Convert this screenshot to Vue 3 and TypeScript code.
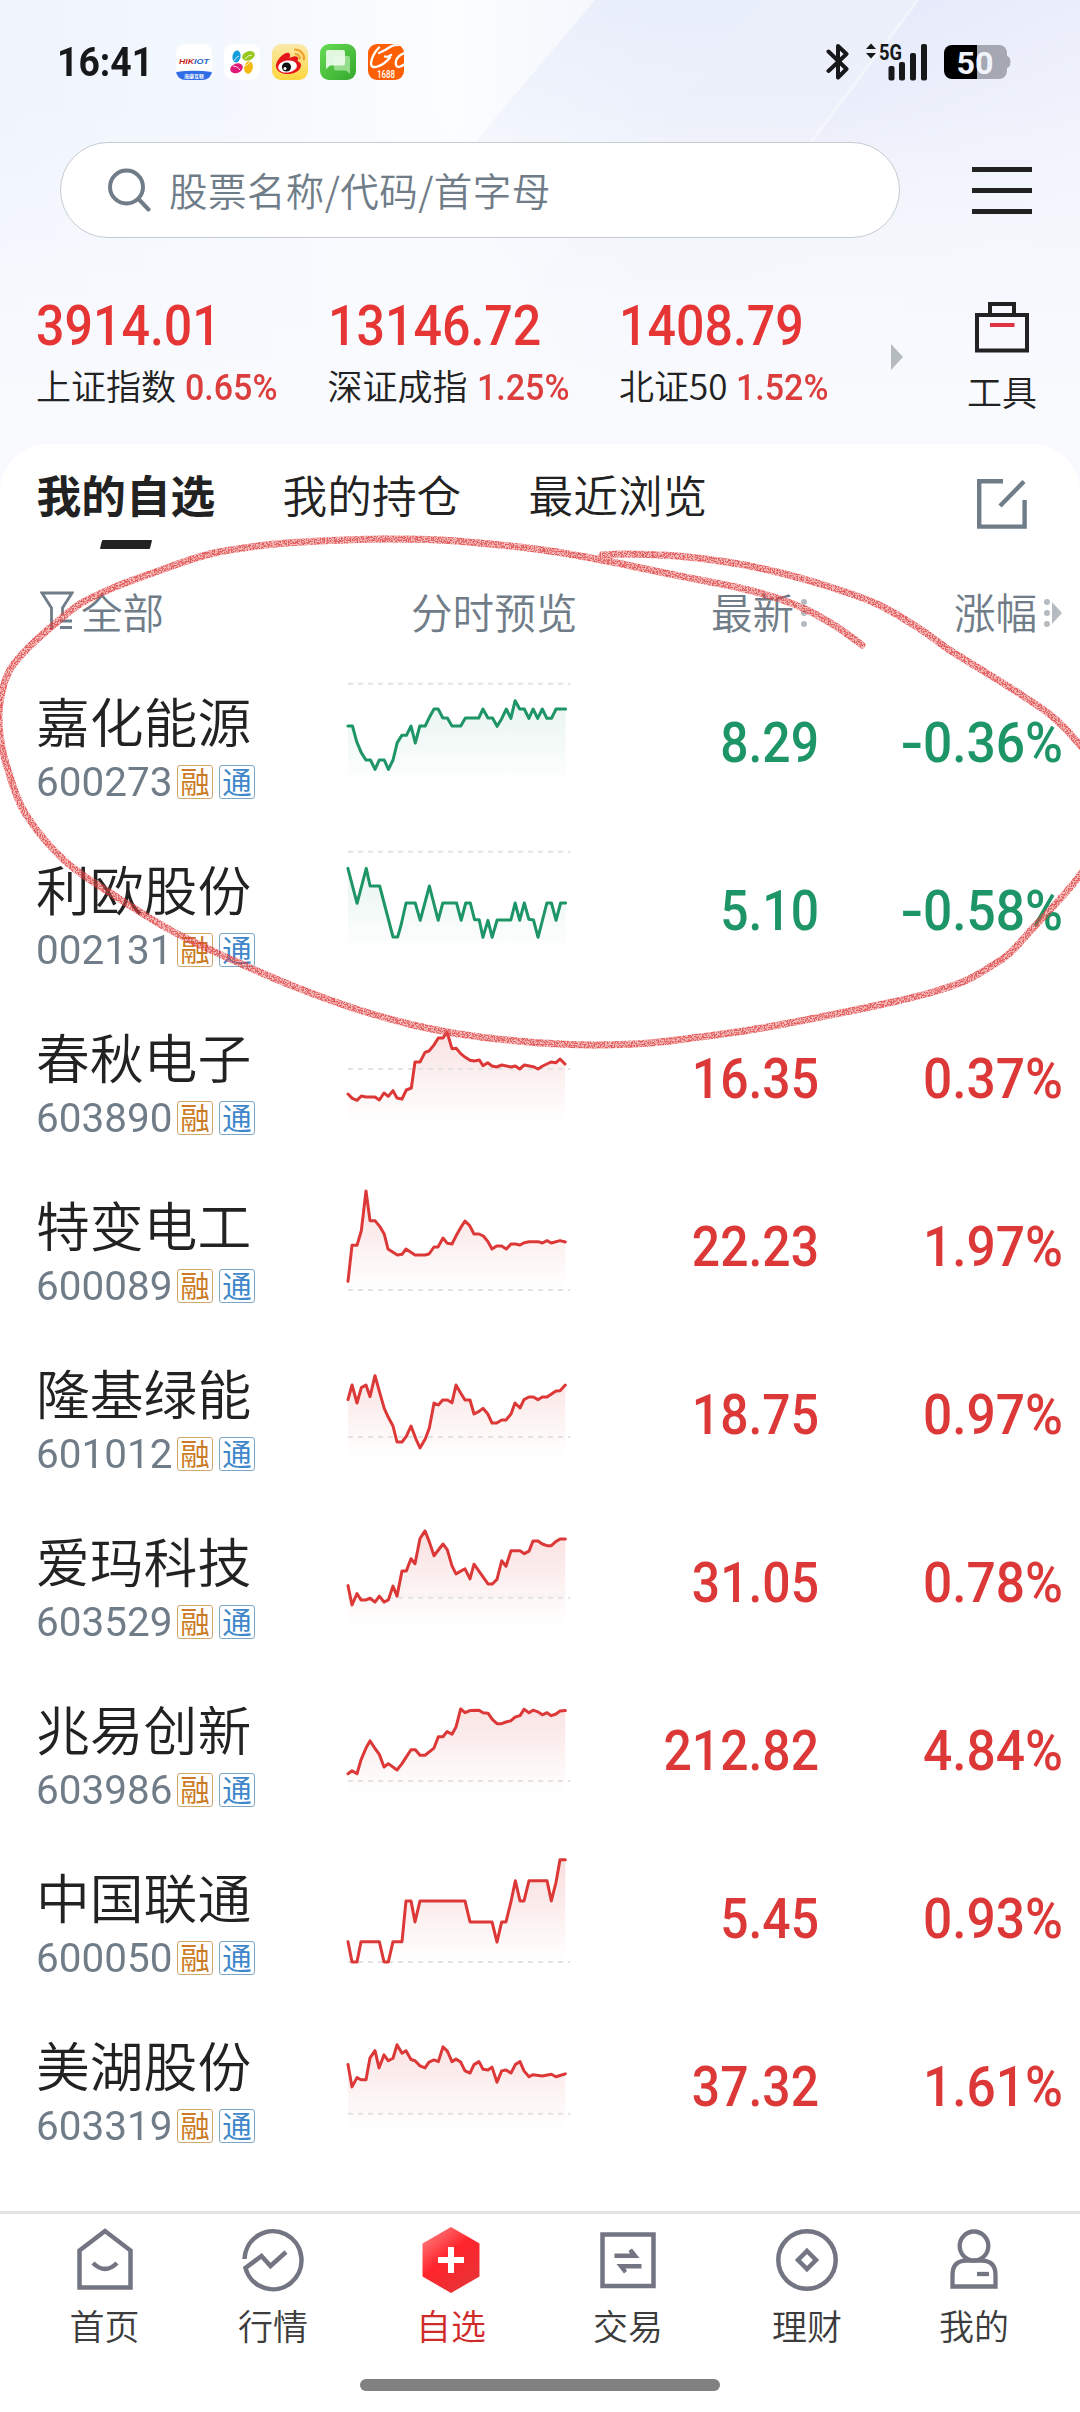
<script setup lang="ts">
interface IndexQuote {
  value: string
  name: string
  change: string
}

interface Stock {
  name: string
  code: string
  price: string
  change: string
  down?: boolean
  /* viewBox of the intraday trace: x, y, width, height */
  box: [number, number, number, number]
  prevClose: number
  trace: string
}

const indices: IndexQuote[] = [
  { value: '3914.01', name: '上证指数', change: '0.65%' },
  { value: '13146.72', name: '深证成指', change: '1.25%' },
  { value: '1408.79', name: '北证50', change: '1.52%' },
]

const stocks: Stock[] = [
  {
    name: '嘉化能源', code: '600273', price: '8.29', change: '-0.36%', down: true,
    box: [909.3, 51, 590.6, 504], prevClose: 131,
    trace: '909,258 921,258 932,305 944,338 956,360 968,360 980,388 991,360 1004,360 1015,388 1027,360 1038,308 1050,286 1062,286 1074,258 1085,309 1097,258 1111,258 1122,232 1134,207 1145,207 1157,234 1169,234 1181,258 1204,258 1216,234 1251,234 1262,207 1275,234 1287,234 1299,259 1311,236 1323,207 1335,235 1346,182 1358,207 1370,207 1382,235 1393,207 1405,235 1417,207 1429,235 1441,235 1453,207 1478,207',
  },
  {
    name: '利欧股份', code: '002131', price: '5.10', change: '-0.58%', down: true,
    box: [909.3, 555, 590.6, 504], prevClose: 635,
    trace: '909,685 933,790 957,685 967,738 992,738 1027,891 1039,891 1048,855 1061,789 1085,789 1098,841 1122,738 1145,841 1157,789 1193,789 1205,841 1217,789 1229,789 1240,839 1252,839 1262,892 1275,841 1286,892 1299,840 1335,840 1346,789 1358,841 1370,789 1382,838 1394,840 1406,892 1429,789 1441,789 1453,841 1465,789 1478,789',
  },
  {
    name: '春秋电子', code: '603890', price: '16.35', change: '0.37%',
    box: [84, -51, 678, 504], prevClose: 177,
    trace: '84,252 97,265 111,271 124,258 138,261 165,261 178,270 192,249 205,259 219,242 231,264 246,267 259,240 274,234 285,156 300,156 315,127 327,123 341,106 355,84 369,84 381,66 396,116 409,115 422,131 436,142 450,151 463,153 478,150 489,167 503,158 516,168 530,171 545,165 574,171 586,168 599,177 613,165 640,170 654,177 668,168 693,156 708,158 720,147 735,162',
  },
  {
    name: '特变电工', code: '600089', price: '22.23', change: '1.97%',
    box: [84, 453, 678, 504], prevClose: 840,
    trace: '84,814 96,706 111,706 124,662 138,543 150,632 165,632 179,649 193,673 204,717 232,735 246,733 258,717 285,735 315,735 327,732 342,711 354,711 369,684 382,700 396,702 409,676 422,653 435,633 449,647 462,672 477,672 490,678 504,695 516,717 530,708 545,708 559,717 573,702 586,702 600,705 613,698 627,695 654,695 667,699 681,692 694,699 720,692 736,696',
  },
  {
    name: '隆基绿能', code: '601012', price: '18.75', change: '0.97%',
    box: [84, 957, 678, 504], prevClose: 1281,
    trace: '84,1169 96,1125 111,1179 124,1133 138,1125 150,1160 165,1097 180,1151 193,1196 205,1222 219,1248 231,1296 246,1296 259,1279 273,1248 287,1285 300,1314 316,1286 328,1254 342,1179 355,1185 368,1170 382,1170 396,1178 408,1125 422,1149 435,1170 450,1170 462,1212 477,1204 489,1195 503,1211 516,1239 530,1239 545,1230 558,1230 573,1212 585,1179 600,1194 612,1169 627,1161 640,1161 654,1169 667,1161 681,1161 708,1143 720,1142 736,1125',
  },
  {
    name: '爱玛科技', code: '603529', price: '31.05', change: '0.78%',
    box: [84, 40.4, 678, 399.2], prevClose: 280,
    trace: '84,251 96,297 111,270 123,285 138,285 150,281 165,290 178,276 192,290 205,285 219,252 231,276 246,216 259,216 273,187 285,199 300,139 315,121 328,147 342,180 369,152 382,166 396,204 408,223 435,211 450,235 462,200 489,230 504,247 517,247 531,236 545,192 558,205 573,168 600,168 613,175 627,169 639,145 654,145 667,152 681,156 694,156 708,146 720,140 736,140',
  },
  {
    name: '兆易创新', code: '603986', price: '212.82', change: '4.84%',
    box: [84, 439.6, 678, 399.2], prevClose: 715,
    trace: '84,698 96,691 111,698 123,665 138,637 150,620 165,638 178,652 192,682 205,674 231,689 246,674 259,658 273,641 286,641 300,654 315,654 342,637 355,610 369,610 381,598 396,604 408,587 422,544 435,553 450,548 477,547 489,553 504,554 517,569 531,579 545,579 558,575 573,572 586,563 600,560 612,545 627,553 639,547 654,551 667,558 681,553 694,560 708,556 720,549 736,548',
  },
  {
    name: '中国联通', code: '600050', price: '5.45', change: '0.93%',
    box: [84, 838.7, 678, 399.2], prevClose: 1145,
    trace: '84,1097 96,1145 111,1145 123,1097 178,1097 192,1145 205,1145 219,1097 246,1097 258,1000 273,1000 285,1050 300,1000 435,1000 450,1050 516,1050 531,1098 545,1050 558,1050 573,1002 586,952 600,1000 612,1000 627,952 681,952 694,1000 708,956 720,902 736,902',
  },
  {
    name: '美湖股份', code: '603319', price: '37.32', change: '1.61%',
    box: [84, 1237.9, 678, 399.2], prevClose: 1506,
    trace: '84,1389 96,1442 111,1420 123,1425 138,1425 150,1373 165,1356 177,1397 192,1366 205,1380 219,1374 231,1342 246,1362 258,1356 273,1377 285,1380 300,1392 315,1397 327,1383 342,1378 355,1382 369,1347 382,1357 396,1382 408,1376 422,1383 435,1404 450,1409 462,1389 477,1382 489,1400 504,1402 516,1395 531,1431 545,1404 558,1402 573,1409 586,1389 600,1382 612,1404 627,1418 639,1413 667,1416 694,1412 708,1418 720,1415 736,1411',
  },
]

const viewBox = (s: Stock) => s.box.join(' ')
const rowY = (s: Stock, px: number) => s.box[1] + (px / 168) * s.box[3]

function area(s: Stock): string {
  const points = s.trace.split(' ')
  const firstX = points[0].split(',')[0]
  const lastX = points[points.length - 1].split(',')[0]
  const floor = rowY(s, 128)
  return `${firstX},${floor} ${s.trace} ${lastX},${floor}`
}

/* pencil stroke samples, joined by a Catmull-Rom curve */
const pencil: [number, number][] = [
  [862, 645], [837, 627], [807, 610], [777, 598], [740, 588], [700, 580], [660, 572], [617, 563], [580, 556],
  [543, 550], [490, 544], [440, 540], [383, 539], [330, 540.5], [275, 544], [210, 554], [153, 573], [115, 587],
  [80, 604], [50, 628], [27, 649], [11, 668], [3, 688], [-1, 713], [1, 742], [8, 770], [25, 813], [65, 861],
  [115, 896], [172, 931], [237, 962], [298, 988], [356, 1009], [413, 1025], [459, 1034], [517, 1041], [560, 1044],
  [600, 1045], [650, 1043], [700, 1037], [750, 1030], [800, 1021], [850, 1011], [893, 1002], [933, 992],
  [967, 980], [993, 965], [1010, 953], [1033, 928], [1060, 899], [1080, 875], [1094, 850], [1100, 810],
  [1094, 765], [1080, 745], [1053, 717], [1017, 692], [977, 667], [948, 649], [920, 629], [877, 604], [827, 586],
  [777, 572], [727, 562], [677, 556], [627, 554], [602, 555],
]

function smooth(p: [number, number][]): string {
  let d = `M${p[0].join(' ')}`
  for (let i = 0; i < p.length - 1; i++) {
    const a = p[i - 1] ?? p[i]
    const b = p[i]
    const c = p[i + 1]
    const e = p[i + 2] ?? c
    d += `C${b[0] + (c[0] - a[0]) / 6} ${b[1] + (c[1] - a[1]) / 6} ${c[0] - (e[0] - b[0]) / 6} ${c[1] - (e[1] - b[1]) / 6} ${c[0]} ${c[1]}`
  }
  return d
}
const loop = smooth(pencil)
</script>

<template>
  <div class="screen">
    <header class="top">
      <svg class="backdrop" viewBox="0 0 1080 520" preserveAspectRatio="none">
        <defs>
          <linearGradient id="sky" x1="0" y1="0" x2="1" y2="0">
            <stop offset="0" stop-color="#eff4fd" />
            <stop offset=".22" stop-color="#f4f8fe" />
            <stop offset=".42" stop-color="#fcfdff" />
            <stop offset=".6" stop-color="#f2f5fc" />
            <stop offset="1" stop-color="#f1f4fc" />
          </linearGradient>
          <linearGradient id="band" x1="0" y1="0" x2="0" y2="1">
            <stop offset="0" stop-color="#e5ecfa" />
            <stop offset="1" stop-color="#eaf0fc" stop-opacity="0" />
          </linearGradient>
          <linearGradient id="band2" x1="0" y1="0" x2=".6" y2="1">
            <stop offset="0" stop-color="#dfe3f9" />
            <stop offset="1" stop-color="#eef1fb" stop-opacity="0" />
          </linearGradient>
          <linearGradient id="fade" x1="0" y1="0" x2="0" y2="1">
            <stop offset=".2" stop-color="#f9fafe" stop-opacity="0" />
            <stop offset=".75" stop-color="#f9fafe" />
          </linearGradient>
        </defs>
        <rect width="1080" height="520" fill="url(#sky)" />
        <path d="M595 0H920L700 290H350Z" fill="url(#band)" opacity=".75" />
        <path d="M762 0H920L700 290H528Z" fill="#eeeffa" opacity=".4" />
        <path d="M918 0H1080V290H700Z" fill="url(#band2)" />
        <path d="M918 0L811 142" stroke="#f8f9fe" stroke-width="3" opacity=".7" />
        <rect width="1080" height="520" fill="url(#fade)" />
      </svg>

      <div class="status">
        <span class="clock">16:41</span>
        <div class="apps">
          <svg viewBox="0 0 36 36">
            <clipPath id="r1"><rect width="36" height="36" rx="9" /></clipPath>
            <g clip-path="url(#r1)">
              <rect width="36" height="36" fill="#fff" />
              <path d="M0 28Q18 25.500 36 28V36H0Z" fill="#2f6ce5" />
            </g>
            <text x="3" y="19.500" class="hik" textLength="15" lengthAdjust="spacingAndGlyphs" fill="#c4281c">HIK</text>
            <text x="18" y="19.500" class="hik" textLength="15" lengthAdjust="spacingAndGlyphs" fill="#1f66c0">IOT</text>
            <text x="8" y="34" class="hik-cn">海康互联</text>
          </svg>
          <svg viewBox="0 0 36 36">
            <rect width="36" height="36" rx="9" fill="#fff" />
            <ellipse cx="12.500" cy="12.500" rx="4" ry="6" fill="#139ddb" transform="rotate(10 12.500 12.500)" />
            <ellipse cx="24.500" cy="11.800" rx="6.500" ry="4.500" fill="#98c71d" transform="rotate(-22 24.500 11.800)" />
            <ellipse cx="12.500" cy="24.300" rx="6.500" ry="4.700" fill="#e01a77" transform="rotate(-20 12.500 24.300)" />
            <ellipse cx="24.500" cy="23.500" rx="4.300" ry="6.200" fill="#f5b90f" transform="rotate(12 24.500 23.500)" />
            <path d="M10 17q3-5 5-5M21 15q3-4 7-4M9 22q5 0 7 4M20 22q4-1 6-4" fill="none" stroke="#fff" stroke-width=".8" />
          </svg>
          <svg viewBox="0 0 36 36">
            <defs>
              <linearGradient id="wb" x1="0" y1="0" x2="0" y2="1">
                <stop offset="0" stop-color="#fbe9ab" /><stop offset="1" stop-color="#fdd63e" />
              </linearGradient>
            </defs>
            <rect width="36" height="36" rx="9" fill="url(#wb)" />
            <path d="M4 21C5 14 14 7 17 9Q19 11 17.500 14Q23 11 25.500 13Q27 14 25.500 17Q29.500 18.500 29 22C28 28 20 30.500 14 30C8 29.500 3.500 26 4 21Z" fill="#e5151c" />
            <ellipse cx="15.500" cy="22.500" rx="9.500" ry="6" fill="#fff" transform="rotate(-8 15.500 22.500)" />
            <circle cx="14.500" cy="23" r="4.600" fill="#111" />
            <circle cx="13" cy="24.500" r="1.500" fill="#fff" />
            <path d="M23 5.500A9 9 0 0 1 32 15.500M23.500 10A5 5 0 0 1 28 14.500" fill="none" stroke="#f0a02c" stroke-width="2" stroke-linecap="round" />
          </svg>
          <svg viewBox="0 0 36 36">
            <defs>
              <linearGradient id="sms" x1="0" y1="0" x2="1" y2="1">
                <stop offset="0" stop-color="#66dc55" /><stop offset="1" stop-color="#35a82b" />
              </linearGradient>
            </defs>
            <rect width="36" height="36" rx="9" fill="url(#sms)" />
            <path d="M16 12H28Q30 12 30 14V30L26 26.500H16Q14 26.500 14 24.500V14Q14 12 16 12Z" fill="#b9ebb2" opacity=".7" />
            <path d="M8 6H23Q25 6 25 8V19Q25 21.500 23 21.500H10L6 25V8Q6 6 8 6Z" fill="#effbed" opacity=".92" />
          </svg>
          <svg viewBox="0 0 36 36">
            <clipPath id="r5"><rect width="36" height="36" rx="9" /></clipPath>
            <g clip-path="url(#r5)">
              <rect width="36" height="36" fill="#fe5f05" />
              <path d="M11 3.500Q4 11 3 19Q3 24 8 23Q16 21 22 13.500M11 9Q18 6 22 3Q26 .5 31 1M17 12.500Q20 13.500 23 11M37 9Q30 11 28 17Q27 23 31 23Q34 22 37 20" fill="none" stroke="#fff" stroke-width="2.300" stroke-linecap="round" />
            </g>
            <text x="9" y="33.500" class="n1688" textLength="18" lengthAdjust="spacingAndGlyphs">1688</text>
          </svg>
        </div>
        <div class="system">
          <svg class="bt" viewBox="0 0 24 40">
            <path d="M2.500 9.500L20.500 27L12 35.500V4L20.500 12L2.500 29" fill="none" stroke="#17181a" stroke-width="4" stroke-linejoin="round" stroke-linecap="round" />
          </svg>
          <svg class="net" viewBox="0 0 64 40">
            <path d="M0 7L5 1.500L10 7ZM0 11L5 16.500L10 11Z" fill="#17181a" />
            <text x="13" y="17.500" class="gen" textLength="23" lengthAdjust="spacingAndGlyphs">5G</text>
            <rect x="22.500" y="24" width="6" height="14.500" rx="2" fill="#17181a" />
            <rect x="33" y="20" width="6" height="18.500" rx="2" fill="#17181a" />
            <rect x="44" y="11" width="6" height="27.500" rx="2" fill="#17181a" />
            <rect x="55" y="2" width="6" height="36.500" rx="2" fill="#17181a" />
          </svg>
          <svg class="bat" viewBox="0 0 67 36">
            <clipPath id="bt"><rect y="1" width="63" height="34" rx="8" /></clipPath>
            <g clip-path="url(#bt)">
              <rect width="33" height="36" fill="#000" /><rect x="33" width="31" height="36" fill="#a5a8b3" />
            </g>
            <path d="M63 12Q66.500 13 66.500 18T63 24Z" fill="#a5a8b3" />
            <text x="12.500" y="29.500" class="level" textLength="37" lengthAdjust="spacingAndGlyphs">50</text>
          </svg>
        </div>
      </div>

      <div class="search-row">
        <div class="search">
          <svg viewBox="0 0 44 44">
            <circle cx="18.500" cy="19" r="16.500" fill="none" stroke="#707d88" stroke-width="4" />
            <path d="M30.500 31L40.500 41.500" stroke="#707d88" stroke-width="4" stroke-linecap="round" />
          </svg>
          <span>股票名称/代码/首字母</span>
        </div>
        <div class="menu"><i /><i /><i /></div>
      </div>

      <div class="indices">
        <div v-for="q in indices" :key="q.name" class="index">
          <span class="value din">{{ q.value }}</span>
          <span class="label">{{ q.name }}<b class="din">{{ q.change }}</b></span>
        </div>
        <svg class="next" viewBox="0 0 12 26"><path d="M0 0L12 13L0 26Z" fill="#b6bbc1" /></svg>
        <div class="tools">
          <svg viewBox="0 0 54 52">
            <path d="M15 12V2H39V12" fill="none" stroke="#222" stroke-width="4" />
            <rect x="2" y="13" width="50" height="35.500" fill="none" stroke="#222" stroke-width="4" />
            <path d="M15 23H39.500" stroke="#e03344" stroke-width="4" />
          </svg>
          <span>工具</span>
        </div>
      </div>
    </header>

    <main class="panel">
      <div class="tabs">
        <span class="tab active">我的自选</span>
        <span class="tab">我的持仓</span>
        <span class="tab">最近浏览</span>
        <svg class="edit" viewBox="0 0 50 50">
          <path d="M26 2.200H2.200V47.600H47.600V21" fill="none" stroke="#707d88" stroke-width="4.400" />
          <path d="M23 27L47 2.500" stroke="#707d88" stroke-width="4.400" />
        </svg>
      </div>

      <div class="head">
        <div class="filter">
          <svg viewBox="0 0 34 40">
            <path d="M11.500 39V17L2 2H32L22.500 17V24" fill="none" stroke="#707d88" stroke-width="2.800" />
            <path d="M20 30H32M20 36.500H32" stroke="#707d88" stroke-width="2.800" />
          </svg>
          <span>全部</span>
        </div>
        <span class="h-chart">分时预览</span>
        <div class="h-price">
          <span>最新</span>
          <svg class="dots" viewBox="0 0 6 28"><g fill="#b6bbc1"><circle cx="3" cy="3" r="3" /><circle cx="3" cy="14" r="3" /><circle cx="3" cy="25" r="3" /></g></svg>
        </div>
        <div class="h-change">
          <span>涨幅</span>
          <svg class="dots wide" viewBox="0 0 18 28"><g fill="#b6bbc1"><circle cx="3" cy="3" r="3" /><circle cx="3" cy="14" r="3" /><circle cx="3" cy="25" r="3" /><path d="M8 3L18 14L8 25Z" /></g></svg>
        </div>
      </div>

      <div v-for="(s, i) in stocks" :key="s.code" class="row" :class="{ down: s.down }">
        <div class="who">
          <span class="name">{{ s.name }}</span>
          <div class="meta">
            <span class="code">{{ s.code }}</span>
            <span class="tag margin">融</span>
            <span class="tag connect">通</span>
          </div>
        </div>
        <svg class="chart" :viewBox="viewBox(s)" preserveAspectRatio="none">
          <defs>
            <linearGradient :id="`g${i}`" gradientUnits="userSpaceOnUse" x1="0" x2="0" :y1="rowY(s, 20)" :y2="rowY(s, 128)">
              <stop offset="0" stop-color="currentColor" :stop-opacity="s.down ? 0.13 : 0.18" />
              <stop offset="1" stop-color="currentColor" stop-opacity="0" />
            </linearGradient>
          </defs>
          <polygon :points="area(s)" :fill="`url(#g${i})`" />
          <line :x1="s.box[0]" :x2="s.box[0] + s.box[2] * 0.983" :y1="s.prevClose" :y2="s.prevClose" class="base" />
          <polyline :points="s.trace" class="trace" />
        </svg>
        <span class="price din">{{ s.price }}</span>
        <span class="change din"><i v-if="s.down" class="sign">-</i>{{ s.change.replace('-', '') }}</span>
      </div>
    </main>

    <nav class="nav">
      <div class="item">
        <svg viewBox="0 0 64 68">
          <path d="M6.500 24.500L32 5L57.500 24.500V61.500H6.500Z" fill="none" stroke="#737682" stroke-width="4.500" />
          <path d="M20 37Q32 49 44 37" fill="none" stroke="#737682" stroke-width="4.500" />
        </svg>
        <span>首页</span>
      </div>
      <div class="item">
        <svg viewBox="0 0 64 68">
          <path d="M3.500 33A28.500 29 0 1 1 4.500 42L20.500 30L29.500 40L45 26" fill="none" stroke="#737682" stroke-width="4.500" />
        </svg>
        <span>行情</span>
      </div>
      <div class="item current">
        <svg viewBox="0 0 64 68">
          <defs>
            <linearGradient id="hex" x1="0" y1="0" x2=".7" y2="1">
              <stop offset="0" stop-color="#ff8f90" /><stop offset=".5" stop-color="#ff242b" /><stop offset="1" stop-color="#e73336" />
            </linearGradient>
          </defs>
          <path d="M32 1L60.500 17.500V50.500L32 67L3.500 50.500V17.500Z" fill="url(#hex)" />
          <path d="M32 21V47M19 34H45" stroke="#fff" stroke-width="6" />
        </svg>
        <span>自选</span>
      </div>
      <div class="item">
        <svg viewBox="0 0 64 68">
          <rect x="6.500" y="8.500" width="51" height="51.500" fill="none" stroke="#737682" stroke-width="4.500" />
          <path d="M18.500 27.500H34L32.500 25L36 22.500L43.500 32H18.500ZM45.500 38V42.500H29.500L31 45L28 47.500L20.500 38Z" fill="#737682" />
        </svg>
        <span>交易</span>
      </div>
      <div class="item">
        <svg viewBox="0 0 64 68">
          <circle cx="32" cy="34" r="28.700" fill="none" stroke="#737682" stroke-width="4.500" />
          <path d="M32 25L41 34L32 43L23 34Z" fill="none" stroke="#737682" stroke-width="4.500" />
        </svg>
        <span>理财</span>
      </div>
      <div class="item">
        <svg viewBox="0 0 64 68">
          <ellipse cx="32" cy="20" rx="14.300" ry="14.500" fill="none" stroke="#737682" stroke-width="4.300" />
          <path d="M10.500 60.500V49Q10.500 35 24 34.700H40Q53.500 35 53.500 49V60.500Z" fill="none" stroke="#737682" stroke-width="4.300" />
          <path d="M35 48H47" stroke="#737682" stroke-width="4.300" />
        </svg>
        <span>我的</span>
      </div>
    </nav>
    <div class="gesture"><i /></div>

    <!-- hand-drawn pencil loop over the first two holdings -->
    <svg class="scribble" viewBox="0 0 1080 2412">
      <defs>
        <filter id="grain" filterUnits="userSpaceOnUse" x="-10" y="500" width="1100" height="580">
          <feTurbulence type="fractalNoise" baseFrequency=".7" numOctaves="2" seed="4" result="n" />
          <feColorMatrix in="n" type="matrix" values="0 0 0 0 0  0 0 0 0 0  0 0 0 0 0  0 0 0 -7 4" result="m" />
          <feComposite in="SourceGraphic" in2="m" operator="in" />
        </filter>
      </defs>
      <path :d="loop" class="soft" />
      <path :d="loop" class="hard" filter="url(#grain)" />
    </svg>
  </div>
</template>

<style>
body {
  background: #fff;
}
</style>

<style scoped>
.screen {
  position: relative;
  width: 1080px;
  height: 2412px;
  overflow: hidden;
  display: flex;
  flex-direction: column;
  background: #fff;
  color: #222;
  font-family: 'Noto Sans CJK SC', sans-serif;
  font-weight: 350;
}
span {
  white-space: nowrap;
}
svg {
  display: block;
  flex: none;
}
.din {
  display: inline-block;
  font-family: Roboto, sans-serif;
  font-weight: 500;
}
.top {
  position: relative;
  height: 444px;
  flex: none;
}
.backdrop {
  position: absolute;
  left: 0;
  top: 0;
  width: 1080px;
  height: 520px;
}

.status {
  position: relative;
  display: flex;
  align-items: center;
  height: 124px;
  padding-left: 57px;
}
.clock {
  width: 119px;
  font: 700 41px/48px Roboto, sans-serif;
  transform: scaleX(0.91);
  transform-origin: left;
  color: #17181a;
}
.apps {
  display: flex;
  gap: 12px;
}
.apps svg {
  width: 36px;
  height: 36px;
}
.hik {
  font: italic 700 8px 'Liberation Sans', sans-serif;
}
.hik-cn {
  font: 700 5px 'Noto Sans CJK SC', sans-serif;
  fill: #fff;
}
.n1688 {
  font: 500 10.5px Roboto, sans-serif;
  fill: #fff;
}
.system {
  display: flex;
  align-items: center;
  margin-left: 422px;
}
.bt {
  width: 24px;
  height: 40px;
}
.net {
  width: 64px;
  height: 40px;
  margin-left: 16px;
  overflow: visible;
}
.gen {
  font: 700 22px Roboto, sans-serif;
  fill: #17181a;
}
.bat {
  width: 67px;
  height: 36px;
  margin-left: 14px;
}
.level {
  font: 700 31px Roboto, sans-serif;
  fill: #f1f3fc;
}

.search-row {
  position: relative;
  display: flex;
  align-items: center;
  margin-top: 18px;
  padding-left: 60px;
}
.search {
  box-sizing: border-box;
  display: flex;
  align-items: center;
  width: 840px;
  height: 96px;
  padding-left: 47px;
  border: 1px solid #c5cbd1;
  border-radius: 48px;
  background: #fff;
  color: #707d88;
  font-size: 38.5px;
  letter-spacing: 0.45px;
}
.search svg {
  width: 44px;
  height: 44px;
  margin-right: 17px;
}
.search span {
  position: relative;
  top: -1px;
}
.menu {
  display: flex;
  flex-direction: column;
  gap: 16px;
  margin-left: 72px;
}
.menu i {
  width: 60px;
  height: 5px;
  background: #222;
}

.indices {
  position: relative;
  display: flex;
  padding: 60px 0 0 36px;
}
.index {
  display: flex;
  flex: none;
  flex-direction: column;
  width: 291.5px;
}
.value {
  color: #e53535;
  font-size: 56px;
  line-height: 56px;
  transform: scaleX(0.895);
  transform-origin: left;
}
.label {
  margin-top: 11px;
  font-size: 35px;
  line-height: 40px;
}
.label .din {
  margin-left: 9px;
  color: #dc3d3d;
  font-size: 36px;
  transform: scaleX(0.945);
  transform-origin: left;
}
.next {
  width: 12px;
  height: 26px;
  margin: 46px 0 0 -19.5px;
}
.tools {
  display: flex;
  flex-direction: column;
  align-items: center;
  width: 80px;
  margin: 4px 0 0 59px;
  font-size: 35px;
  line-height: 40px;
}
.tools svg {
  width: 54px;
  height: 52px;
  margin-bottom: 17px;
}

.panel {
  position: relative;
  height: 1767px;
  flex: none;
  border-radius: 48px 48px 0 0;
  background: #fff;
}
.tabs {
  display: flex;
  align-items: center;
  height: 60px;
  padding: 20px 0 0 36.5px;
  font-size: 44.7px;
  line-height: 60px;
}
.tab {
  position: relative;
  width: 178px;
  margin-right: 68px;
}
.active {
  font-weight: 700;
}
.active::after {
  content: '';
  position: absolute;
  left: 64.5px;
  top: 76px;
  width: 50px;
  height: 9px;
  border-radius: 1px;
  background: #222;
  transform: skewX(-14deg);
}
.edit {
  width: 50px;
  height: 50px;
  margin: 19px 0 0 202px;
}
.head {
  display: flex;
  align-items: center;
  height: 60px;
  margin: 57px 0 16px;
  color: #707d88;
  font-size: 41.6px;
  line-height: 60px;
}
.filter {
  display: flex;
  align-items: center;
  width: 371px;
  padding-left: 40px;
}
.filter svg {
  width: 34px;
  height: 40px;
  margin-right: 7px;
}
.h-chart {
  width: 300px;
}
.h-price,
.h-change {
  display: flex;
  align-items: center;
}
.h-price {
  width: 243px;
}
.dots {
  width: 6px;
  height: 28px;
  margin: 3px 0 0 7px;
}
.dots.wide {
  width: 18px;
}

.row {
  display: flex;
  align-items: center;
  height: 168px;
  color: #dc3838;
}
.row.down {
  color: #1d9566;
}
.who {
  box-sizing: border-box;
  width: 348px;
  padding: 5px 0 0 36px;
}
.name {
  display: block;
  color: #222;
  font-size: 53.8px;
  line-height: 64px;
}
.meta {
  display: flex;
  align-items: center;
  height: 36px;
  margin-top: 12px;
}
.code {
  width: 141px;
  color: #707d88;
  font: 400 41.5px/36px Roboto, sans-serif;
  transform: scaleX(0.975);
  transform-origin: left;
}
.tag {
  box-sizing: border-box;
  width: 36px;
  height: 34px;
  margin-right: 6px;
  border: 1.5px solid;
  border-radius: 3px;
  font-size: 29.5px;
  font-weight: 400;
  line-height: 28px;
  text-align: center;
}
.margin {
  color: #cb7a25;
  border-color: #d3a66d;
}
.connect {
  color: #3f87ca;
  border-color: #79a6c6;
}
.chart {
  width: 226px;
  height: 168px;
  overflow: visible;
}
.base {
  stroke: #e2e2e2;
  stroke-width: 2px;
  stroke-dasharray: 5 5;
  vector-effect: non-scaling-stroke;
}
.trace {
  fill: none;
  stroke: currentColor;
  stroke-width: 3px;
  stroke-linejoin: round;
  stroke-linecap: round;
  vector-effect: non-scaling-stroke;
}
.price,
.change {
  padding-top: 3px;
  font-size: 56px;
  line-height: 64px;
  text-align: right;
  transform: scaleX(0.89);
  transform-origin: right;
}
.price {
  width: 245px;
}
.change {
  width: 244px;
  transform: scaleX(0.92);
}
.sign {
  display: inline-block;
  margin-right: 0;
  font-style: normal;
  transform: scaleX(1.3);
  transform-origin: right;
}

.nav {
  display: grid;
  grid-template-columns: 169px 168px 188px 166px 192px 142px;
  box-sizing: border-box;
  height: 145px;
  padding: 12px 0 0 20px;
  border-top: 3px solid #e3e3e3;
  flex: none;
}
.item {
  display: flex;
  flex-direction: column;
  align-items: center;
  color: #3c3c3c;
  font-size: 35px;
  line-height: 44px;
}
.item svg {
  width: 64px;
  height: 68px;
  margin-bottom: 9px;
}
.current {
  color: #cf2b2b;
}
.gesture {
  display: flex;
  justify-content: center;
  padding-top: 23px;
}
.gesture i {
  width: 360px;
  height: 12px;
  border-radius: 6px;
  background: #808080;
}

.scribble {
  position: absolute;
  left: 0;
  top: 0;
  width: 1080px;
  height: 2412px;
  pointer-events: none;
  fill: none;
  stroke-linecap: round;
  stroke-linejoin: round;
}
.soft {
  stroke: rgba(232, 90, 90, 0.42);
  stroke-width: 7px;
}
.hard {
  stroke: rgba(218, 50, 50, 0.65);
  stroke-width: 7px;
}
</style>
